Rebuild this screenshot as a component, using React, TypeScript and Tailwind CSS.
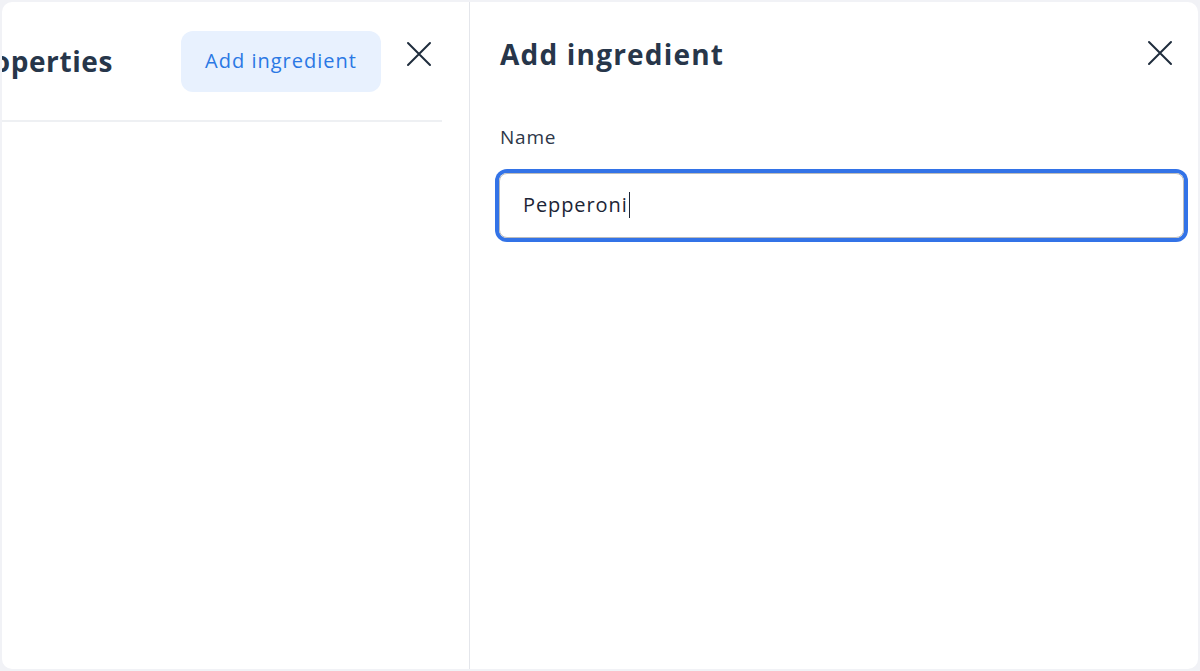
function CloseIcon() {
  return (
    <svg width="26" height="26" viewBox="0 0 26 26" fill="none" stroke="currentColor" strokeWidth="2" strokeLinecap="round">
      <path d="M2 2L24 24M24 2L2 24" />
    </svg>
  );
}

export default function App() {
  return (
    <div className="h-[671px] w-[1200px] bg-[#f1f2f6] p-[2px] font-['Open_Sans',sans-serif] text-[#27364a] antialiased">
      <div className="flex h-full overflow-hidden rounded-[10px] bg-white">
        {/* Left panel: the recipe drawer underneath, partly out of view */}
        <aside className="w-[468px] shrink-0 overflow-hidden border-r border-[#e4e6eb]">
          <div className="-ml-[200px] w-[640px]">
            <header className="flex h-[120px] items-center justify-end border-b-2 border-[#eef0f3] pr-[10px]">
              <h2 className="whitespace-nowrap text-[28px] font-bold tracking-[0.6px]">Pizza properties</h2>
              <button className="ml-[68px] h-[61px] w-[200px] rounded-xl bg-[#e8f1fe] text-[20px] tracking-[1px] text-[#2a78e4]">
                Add ingredient
              </button>
              <button className="ml-[25px] -mt-[14px] text-[#1f2d3d]">
                <CloseIcon />
              </button>
            </header>
          </div>
        </aside>

        {/* Right panel: add ingredient form */}
        <section className="flex-1 pl-[30px] pr-[25px]">
          <div className="flex items-center justify-between pt-[31px]">
            <h1 className="text-[28px] font-bold tracking-[1.2px]">Add ingredient</h1>
            <button className="-mt-[2px] text-[#1f2d3d]">
              <CloseIcon />
            </button>
          </div>

          <label className="mt-[48px] block text-[19px] tracking-[0.8px] text-[#2d3748]">Name</label>
          <div className="-ml-[1px] mr-[-11px] mt-[21px] flex h-[65px] items-center rounded-[8px] border border-[#bcbcbc] px-[23px] ring-4 ring-[#3373e7]">
            <span className="text-[20px] tracking-[0.9px] text-[#1c2536]">Pepperoni</span>
            <span className="ml-[1px] h-[26px] w-px bg-[#1c2536]" />
          </div>
        </section>
      </div>
    </div>
  );
}
